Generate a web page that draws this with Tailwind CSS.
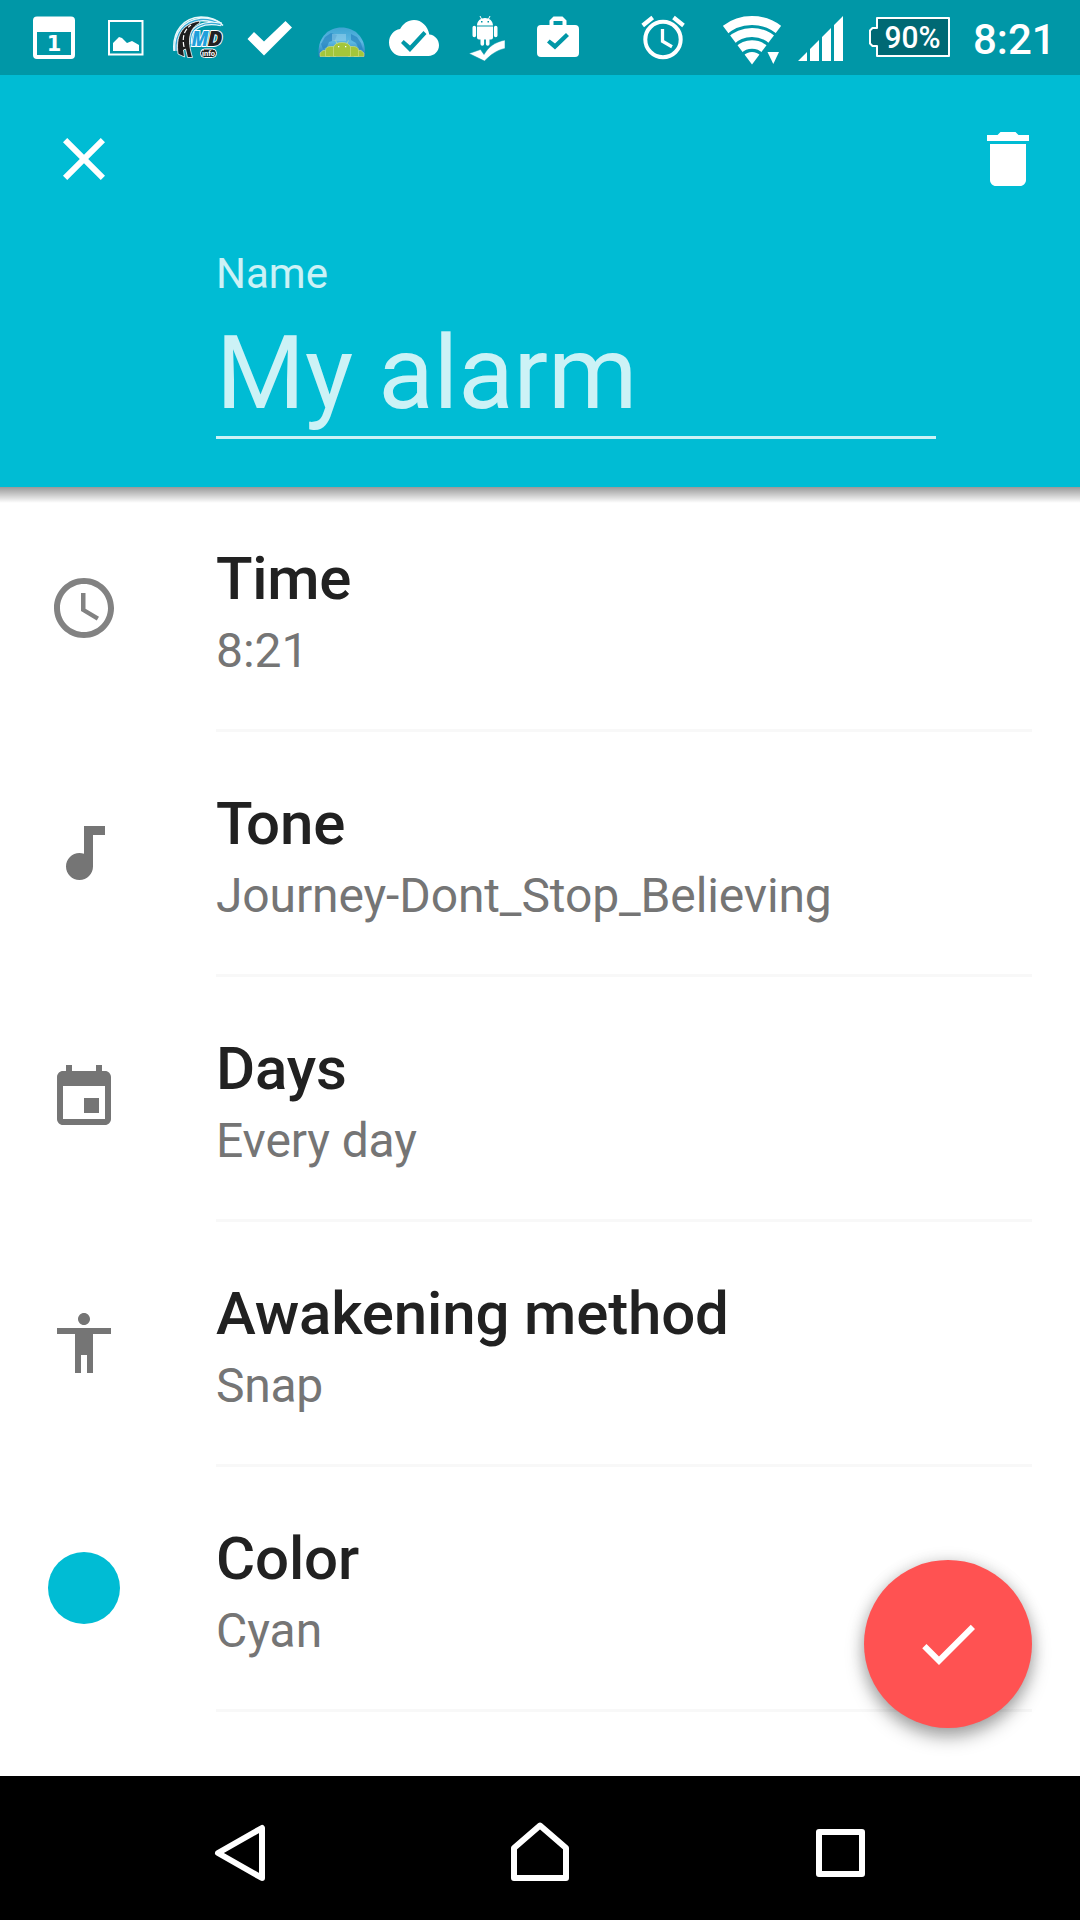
<!DOCTYPE html>
<html lang="en">
<head>
  <meta charset="UTF-8" />
  <meta name="viewport" content="width=device-width,initial-scale=1" />
  <title>My alarm</title>
  <script src="https://cdn.jsdelivr.net/npm/@tailwindcss/browser@4"></script>
</head>
<body class="bg-white font-['Roboto',sans-serif]">
  <div class="flex flex-col w-[1080px] h-[1920px] overflow-hidden">

    <!-- Status bar -->
    <div class="flex h-[75px] shrink-0 bg-[#0097a7] text-white">
      <!-- calendar -->
      <svg class="ml-[33px] shrink-0" width="42" height="75" viewBox="33 0 42 75">
        <path fill="#fff" fill-rule="evenodd" d="M37 16.500h34a4 4 0 0 1 4 4V55a4 4 0 0 1-4 4H37a4 4 0 0 1-4-4V20.500a4 4 0 0 1 4-4zM37 32v23h34V32z"/>
        <text x="54" y="51" text-anchor="middle" font-family="DejaVu Sans" font-weight="700" font-size="21" fill="#fff">1</text>
      </svg>
      <!-- picture -->
      <svg class="ml-[33px] shrink-0" width="36" height="75" viewBox="108 0 36 75">
        <rect x="109" y="21" width="33.500" height="33.500" fill="none" stroke="#fff" stroke-width="2"/>
        <path fill="#fff" d="M113 51v-8l6-6 3 1 5 5 5-2 7 4v6z"/>
      </svg>
      <!-- MD info -->
      <svg class="ml-[29px] shrink-0" width="51" height="75" viewBox="173 0 51 75">
        <path d="M174 51C172 31 184 17.500 201 17c9 0 17 3 22 8.500" fill="none" stroke="#e9f8fb" stroke-width="1.500"/>
        <path d="M176 51c-1-18 8-29.500 25-31.500 8-.5 14 1.500 20 5" fill="none" stroke="#e9f8fb" stroke-width="4"/>
        <path d="M176 51c-1-18 8-29.500 25-31.500 8-.5 14 1.500 20 5" fill="none" stroke="#35a9d6" stroke-width="1.300"/>
        <path d="M190.500 44c-1-9 2-15 9-18 6-3 14-3 22-1.500" fill="none" stroke="#e9f8fb" stroke-width="3.500"/>
        <path d="M190.500 44c-1-9 2-15 9-18 6-3 14-3 21-1.500" fill="none" stroke="#35a9d6" stroke-width="1.300"/>
        <path d="M178 54c-2-17 2-29 21-33l1 2c-11 5-13 17-7.500 34.500h-5L185.500 49l-2 1 1 7z" fill="#1e1e1e" stroke="#fff" stroke-width=".8"/>
        <path d="M184 47c-2-10 0-17 7-22" stroke="#fff" stroke-width="1.200" stroke-dasharray="5 2" fill="none"/>
        <g font-family="Open Sans" font-weight="800" font-style="italic" font-size="20.500" stroke="#fff" stroke-width="1.800" paint-order="stroke">
          <text x="191.500" y="46" textLength="17" lengthAdjust="spacingAndGlyphs" fill="#1f9fdb">M</text>
          <text x="207.500" y="46" textLength="15" lengthAdjust="spacingAndGlyphs" fill="#222">D</text>
        </g>
        <rect x="200.500" y="49" width="16" height="8.500" rx="4" fill="#222" stroke="#fff"/>
        <text x="208.500" y="56" text-anchor="middle" font-family="Roboto" font-weight="700" font-size="7.500" fill="#fff">info</text>
      </svg>
      <!-- tick -->
      <svg class="ml-[23px] shrink-0" width="46" height="75" viewBox="247 0 46 75">
        <path fill="#fff" d="M247.500 39l6.500-7 10 9.500L285.500 21l6.500 6.500L264 55.500z"/>
      </svg>
      <!-- android globe -->
      <svg class="ml-[24px] shrink-0" width="50" height="75" viewBox="317 0 50 75">
        <defs>
          <linearGradient id="globe" x1="0" y1="0" x2="0" y2="1">
            <stop offset="0" stop-color="#3fa5d3"/>
            <stop offset=".5" stop-color="#5db8e2"/>
            <stop offset="1" stop-color="#1a74b8"/>
          </linearGradient>
        </defs>
        <path d="M318.500 57v-5c0-15 10-24.500 23-24.500S365 37 365 52v5z" fill="url(#globe)"/>
        <path d="M321 44l4-7 6-4 6 2-2 5-6 2-2 5-4 2zM351 34l6 3 4 6 2 7-4-1-3-6-5-3z" fill="#1f7dbd" fill-opacity=".6"/>
        <path d="M332 34h14v7h-14z" fill="#9bd4ee" fill-opacity=".5"/>
        <g fill="#a4c63a" stroke="#d3e38f" stroke-width=".6">
          <path d="M320 56.500v-3.500l3-2.500h7v6zM364 56.500v-3.500l-3-2.500h-7v6z"/>
          <path d="M325.500 56.500v-6c0-3 2.500-4 5-4h5v10zM358.500 56.500v-6c0-3-2.500-4-5-4h-5v10z"/>
          <path d="M333.500 56.500V47c1-3 4-4.500 8.500-4.500s7.500 1.500 8.500 4.500v9.500z"/>
          <path d="M337 43.500l-1.500-3M347 43.500l1.500-3"/>
        </g>
        <path fill="#fff" d="M338 46h1.300v1.300H338zM345 46h1.300v1.300H345z"/>
      </svg>
      <!-- cloud done -->
      <svg class="ml-[22px] shrink-0" width="50" height="75" viewBox="389 0 50 75">
        <path fill="#fff" d="M429.300 34.500C427.900 26.300 421.700 20 414 20c-6 0-11.300 3.900-13.900 9-6.300.8-11.100 6.600-11.100 13.500C389 50 394.600 56 401.500 56h27c5.800 0 10.500-4.700 10.500-10.700 0-5.700-4.100-10.300-9.700-10.800z"/>
        <path fill="#0097a7" d="M401 43l2.700-3 6.300 5.500L423.500 31l3 3L410 52z"/>
      </svg>
      <!-- android tick -->
      <svg class="ml-[30px] shrink-0" width="36" height="75" viewBox="469 0 36 75">
        <path fill="#fff" fill-rule="evenodd" d="M477 25.500c0-4.500 3.500-7.500 8-7.500s8 3 8 7.500zM481 21v1.500h1.500V21zM487.500 21v1.500h1.500V21z"/>
        <path stroke="#fff" d="M481.500 19l-1.500-3M488.500 19l1.500-3"/>
        <path fill="#fff" d="M477 26.500h16v11a2 2 0 0 1-2 2h-1.500v4.500a1.800 1.800 0 0 1-3.600 0v-4.500h-1.800v4.500a1.800 1.800 0 0 1-3.600 0v-4.500H479a2 2 0 0 1-2-2zM472.500 27.500a1.800 1.800 0 0 1 3.600 0v8a1.800 1.800 0 0 1-3.600 0zM493.900 27.500a1.800 1.800 0 0 1 3.600 0v8a1.800 1.800 0 0 1-3.600 0z"/>
        <path fill="#fff" stroke="#0097a7" stroke-width=".5" d="M469 53.500l11.500-4 3.500 5c5-8 10-12 21-14.500v8.500c-8 1.500-14 6-20.500 12.500z"/>
      </svg>
      <!-- briefcase -->
      <svg class="ml-[32px] shrink-0" width="42" height="75" viewBox="537 0 42 75">
        <path fill="#fff" fill-rule="evenodd" d="M541 25h8.500v-4.500l4-4h9l4 4V25h8.500a4 4 0 0 1 4 4v24a4 4 0 0 1-4 4h-34a4 4 0 0 1-4-4V29a4 4 0 0 1 4-4zM553.500 25h9v-4h-9z"/>
        <path fill="#0097a7" d="M547 42.500l2.700-3 5.300 4L566 33l3 3-14 13.500z"/>
      </svg>
      <!-- alarm -->
      <svg class="ml-[62px] shrink-0" width="44" height="75" viewBox="641 0 44 75">
        <g fill="none" stroke="#fff">
          <circle cx="663" cy="39.500" r="17.700" stroke-width="4"/>
          <path stroke-width="3.300" d="M662.500 29v12.300l9.500 5.400"/>
          <path stroke-width="4.200" d="M642.700 25.500l10-8M673.500 17.500l10 8"/>
        </g>
      </svg>
      <!-- wifi -->
      <svg class="ml-[38px] shrink-0" width="58" height="75" viewBox="723 0 58 75">
        <defs>
          <clipPath id="fan"><path d="M752 64.500L717 18V0h70v18z"/></clipPath>
        </defs>
        <g clip-path="url(#fan)">
          <circle cx="752" cy="64" r="12" fill="#fff"/>
          <g fill="none" stroke="#fff">
            <circle cx="752" cy="64" r="19.500" stroke-width="8.500"/>
            <circle cx="752" cy="64" r="31.500" stroke-width="9"/>
            <circle cx="752" cy="64" r="43.500" stroke-width="9"/>
          </g>
        </g>
        <path fill="#fff" d="M767.500 52H779l-5.700 12z"/>
      </svg>
      <!-- signal -->
      <svg class="ml-[17px] shrink-0" width="45" height="75" viewBox="798 0 45 75">
        <path fill="#fff" d="M798 61l9-9v9zM810 61V49l9-9v21zM822 61V37l9-9v33zM834 61V25l9-9v45z"/>
      </svg>
      <!-- battery -->
      <svg class="ml-[26px] shrink-0" width="81" height="75" viewBox="869 0 81 75">
        <path fill="#006974" stroke="#fff" stroke-width="2" stroke-linejoin="round" d="M877 18h72v38h-72v-10h-4.500l-2.500-2.500V30.500l2.500-2.500h4.500z"/>
        <text x="912.500" y="48" text-anchor="middle" font-family="Roboto" font-weight="500" font-size="31.500" fill="#fff" textLength="56" lengthAdjust="spacingAndGlyphs">90%</text>
      </svg>
      <span class="ml-[23px] pt-[4px] text-[42px] leading-[72px] font-medium">8:21</span>
    </div>

    <!-- Header -->
    <div class="h-[412px] shrink-0 bg-[#00bcd4]">
      <div class="flex justify-between pt-12 pl-12 pr-9">
        <svg class="size-[72px]" viewBox="0 0 24 24" fill="#fff"><path d="M19 6.410L17.590 5 12 10.590 6.410 5 5 6.410 10.590 12 5 17.590 6.410 19 12 13.410 17.590 19 19 17.590 13.410 12z"/></svg>
        <svg class="size-[72px]" viewBox="0 0 24 24" fill="#fff"><path d="M6 19c0 1.100.9 2 2 2h8c1.100 0 2-.9 2-2V7H6v12zM19 4h-3.500l-1-1h-5l-1 1H5v2h14V4z"/></svg>
      </div>
      <div class="ml-[216px] w-[720px] pt-[54px] text-white/80">
        <div class="text-[42px] leading-[50px]">Name</div>
        <div class="mt-[14px] h-[126px] border-b-[3px] border-white/80 text-[102px] leading-[120px] tracking-[-0.15px]">My alarm</div>
      </div>
    </div>

    <!-- Settings list -->
    <div class="relative flex-1">
      <div class="absolute inset-x-0 top-0 h-[16px] bg-linear-to-b from-black/40 to-transparent"></div>

      <div class="flex h-[245px]">
        <div class="flex w-[216px] h-[242px] items-center pl-12">
          <svg class="size-[72px]" viewBox="0 0 24 24" fill="#828282"><path d="M11.990 2C6.470 2 2 6.480 2 12s4.470 10 9.990 10C17.520 22 22 17.520 22 12S17.520 2 11.990 2zM12 20c-4.420 0-8-3.580-8-8s3.580-8 8-8 8 3.580 8 8-3.580 8-8 8zM12.500 7H11v6l5.250 3.150.75-1.230-4.500-2.670z"/></svg>
        </div>
        <div class="w-[816px] border-b-[3px] border-[#f8f8f8] pt-[57px]">
          <div class="text-[60px] leading-[70px] font-medium tracking-[-0.25px] text-[#212121]">Time</div>
          <div class="mt-[9px] text-[48px] leading-[56px] text-[#757575]">8:21</div>
        </div>
      </div>

      <div class="flex h-[245px]">
        <div class="flex w-[216px] h-[242px] items-center pl-12">
          <svg class="size-[72px]" viewBox="0 0 24 24" fill="#757575"><path d="M12 3v9.260c-.5-.17-1-.26-1.500-.26C8 12 6 14 6 16.500S8 21 10.500 21s4.500-2 4.500-4.500V6h4V3h-7z"/></svg>
        </div>
        <div class="w-[816px] border-b-[3px] border-[#f8f8f8] pt-[57px]">
          <div class="text-[60px] leading-[70px] font-medium tracking-[-0.15px] text-[#212121]"><span class="tracking-[-6.5px]">T</span>one</div>
          <div class="mt-[9px] text-[48px] leading-[56px] tracking-[-0.12px] text-[#757575]">Journey-Dont_Stop_Believing</div>
        </div>
      </div>

      <div class="flex h-[245px]">
        <div class="flex w-[216px] h-[242px] items-center pl-12">
          <svg class="size-[72px]" viewBox="0 0 24 24" fill="#757575"><path d="M17 12h-5v5h5v-5zM16 1v2H8V1H6v2H5c-1.110 0-1.990.9-1.990 2L3 19c0 1.100.89 2 2 2h14c1.100 0 2-.9 2-2V5c0-1.100-.9-2-2-2h-1V1h-2zm3 18H5V8h14v11z"/></svg>
        </div>
        <div class="w-[816px] border-b-[3px] border-[#f8f8f8] pt-[57px]">
          <div class="text-[60px] leading-[70px] font-medium tracking-[-0.15px] text-[#212121]">Days</div>
          <div class="mt-[9px] text-[48px] leading-[56px] tracking-[-0.12px] text-[#757575]">Every day</div>
        </div>
      </div>

      <div class="flex h-[245px]">
        <div class="flex w-[216px] h-[242px] items-center pl-12">
          <svg class="size-[72px]" viewBox="0 0 24 24" fill="#757575"><path d="M12 2c1.100 0 2 .9 2 2s-.9 2-2 2-2-.9-2-2 .9-2 2-2zm9 7h-6v13h-2v-6h-2v6H9V9H3V7h18v2z"/></svg>
        </div>
        <div class="w-[816px] border-b-[3px] border-[#f8f8f8] pt-[57px]">
          <div class="text-[60px] leading-[70px] font-medium tracking-[-0.15px] text-[#212121]">Awakening method</div>
          <div class="mt-[9px] text-[48px] leading-[56px] tracking-[-0.3px] text-[#757575]">Snap</div>
        </div>
      </div>

      <div class="flex h-[245px]">
        <div class="flex w-[216px] h-[242px] items-center pl-12">
          <div class="size-[72px] rounded-full bg-[#00bcd4]"></div>
        </div>
        <div class="w-[816px] border-b-[3px] border-[#f8f8f8] pt-[57px]">
          <div class="text-[60px] leading-[70px] font-medium tracking-[-0.15px] text-[#212121]">Color</div>
          <div class="mt-[9px] text-[48px] leading-[56px] text-[#757575]">Cyan</div>
        </div>
      </div>

      <!-- Save button -->
      <button class="absolute right-12 bottom-12 flex size-[168px] items-center justify-center rounded-full bg-[#ff5252] shadow-[0_9px_18px_rgba(0,0,0,0.34),0_0_16px_rgba(0,0,0,0.12)]">
        <svg class="size-[72px]" viewBox="0 0 24 24" fill="#fff"><path d="M9 16.170L4.830 12l-1.420 1.410L9 19 21 7l-1.410-1.410z"/></svg>
      </button>
    </div>

    <!-- Navigation bar -->
    <div class="flex h-[144px] shrink-0 bg-black">
      <svg class="ml-[210px]" width="60" height="144" viewBox="210 1776 60 144">
        <path d="M262 1828v50l-44-25z" fill="none" stroke="#fff" stroke-width="6" stroke-linejoin="round"/>
      </svg>
      <svg class="ml-[240px]" width="60" height="144" viewBox="510 1776 60 144">
        <path d="M514 1878v-30l26-22.500 26 22.500v30z" fill="none" stroke="#fff" stroke-width="6" stroke-linejoin="round"/>
      </svg>
      <svg class="ml-[240px]" width="60" height="144" viewBox="810 1776 60 144">
        <rect x="819" y="1832" width="43" height="42" fill="none" stroke="#fff" stroke-width="6" stroke-linejoin="round"/>
      </svg>
    </div>
  </div>
</body>
</html>
